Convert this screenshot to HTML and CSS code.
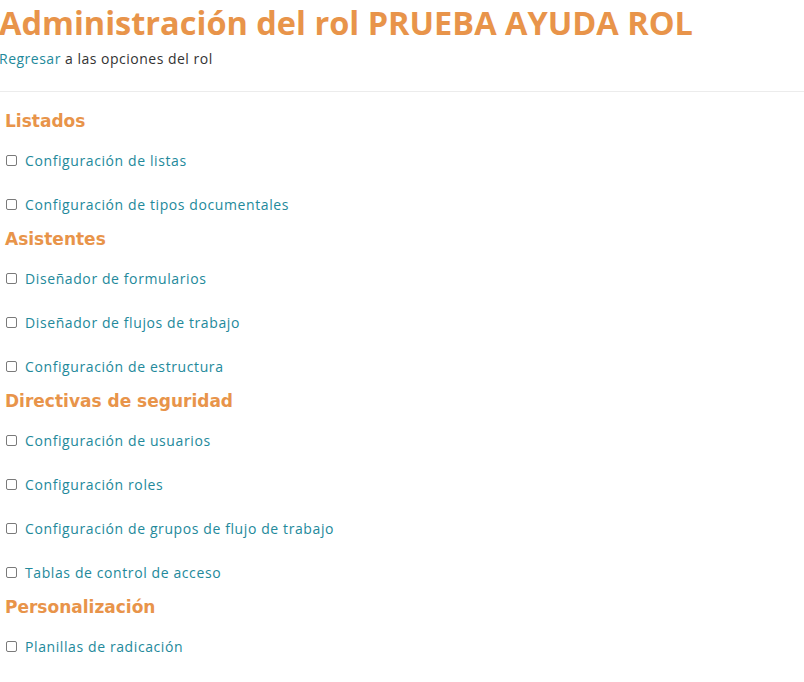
FILE: index.html
```html
<!DOCTYPE html>
<html lang="es">
<head>
<meta charset="utf-8">
<title>Administración del rol</title>
<link rel="stylesheet" href="styles.css">
</head>
<body>
<div class="page">
  <header class="page-header">
    <h1 class="title">Administración del rol PRUEBA AYUDA ROL</h1>
    <p class="subtitle"><a class="link" href="#">Regresar</a> a las opciones del rol</p>
  </header>
  <hr class="divider">
  <section class="group">
    <h2 class="group-title">Listados</h2>
    <ul class="options">
      <li class="option"><span class="box"></span><a class="link" href="#">Configuración de listas</a></li>
      <li class="option"><span class="box"></span><a class="link" href="#">Configuración de tipos documentales</a></li>
    </ul>
  </section>
  <section class="group">
    <h2 class="group-title">Asistentes</h2>
    <ul class="options">
      <li class="option"><span class="box"></span><a class="link" href="#">Diseñador de formularios</a></li>
      <li class="option"><span class="box"></span><a class="link" href="#">Diseñador de flujos de trabajo</a></li>
      <li class="option"><span class="box"></span><a class="link" href="#">Configuración de estructura</a></li>
    </ul>
  </section>
  <section class="group">
    <h2 class="group-title">Directivas de seguridad</h2>
    <ul class="options">
      <li class="option"><span class="box"></span><a class="link" href="#">Configuración de usuarios</a></li>
      <li class="option"><span class="box"></span><a class="link" href="#">Configuración roles</a></li>
      <li class="option"><span class="box"></span><a class="link" href="#">Configuración de grupos de flujo de trabajo</a></li>
      <li class="option"><span class="box"></span><a class="link" href="#">Tablas de control de acceso</a></li>
    </ul>
  </section>
  <section class="group">
    <h2 class="group-title">Personalización</h2>
    <ul class="options">
      <li class="option"><span class="box"></span><a class="link" href="#">Planillas de radicación</a></li>
    </ul>
  </section>
</div>
</body>
</html>
```
FILE: styles.css
```css
html, body {
  margin: 0;
  padding: 0;
  background: #ffffff;
}
body {
  font-family: "Open Sans", "DejaVu Sans", sans-serif;
  color: #333333;
}
.page {
  display: flex;
  flex-direction: column;
}
.page-header {
  padding-top: 2px;
}
.title {
  margin: 0 0 0 -1px;
  font-family: "Open Sans", "DejaVu Sans", sans-serif;
  font-weight: bold;
  font-size: 32.5px;
  line-height: 42px;
  color: #e8944a;
  white-space: nowrap;
}
.subtitle {
  margin: 5px 0 0 -1px;
  font-size: 14px;
  letter-spacing: 0.5px;
  line-height: 20px;
  color: #333333;
}
.link {
  color: #23899b;
  text-decoration: none;
}
.divider {
  margin: 22px 0 0 0;
  border: 0;
  border-top: 1px solid #ececec;
  height: 0;
}
.group {
  padding-left: 5px;
}
.group:first-of-type {
  margin-top: 16px;
}
.group-title {
  margin: 0 0 6px 0;
  padding-top: 2px;
  font-family: "DejaVu Sans", sans-serif;
  font-weight: bold;
  font-size: 17px;
  line-height: 22px;
  color: #e8944a;
}
.options {
  list-style: none;
  margin: 0;
  padding: 0;
}
.option {
  display: flex;
  align-items: center;
  gap: 8px;
  height: 44px;
  font-size: 14px;
  letter-spacing: 0.6px;
}
.box {
  display: inline-block;
  box-sizing: border-box;
  width: 11px;
  height: 11px;
  margin-left: 1px;
  border: 1px solid #7a7a7a;
  border-radius: 2px;
}
```
